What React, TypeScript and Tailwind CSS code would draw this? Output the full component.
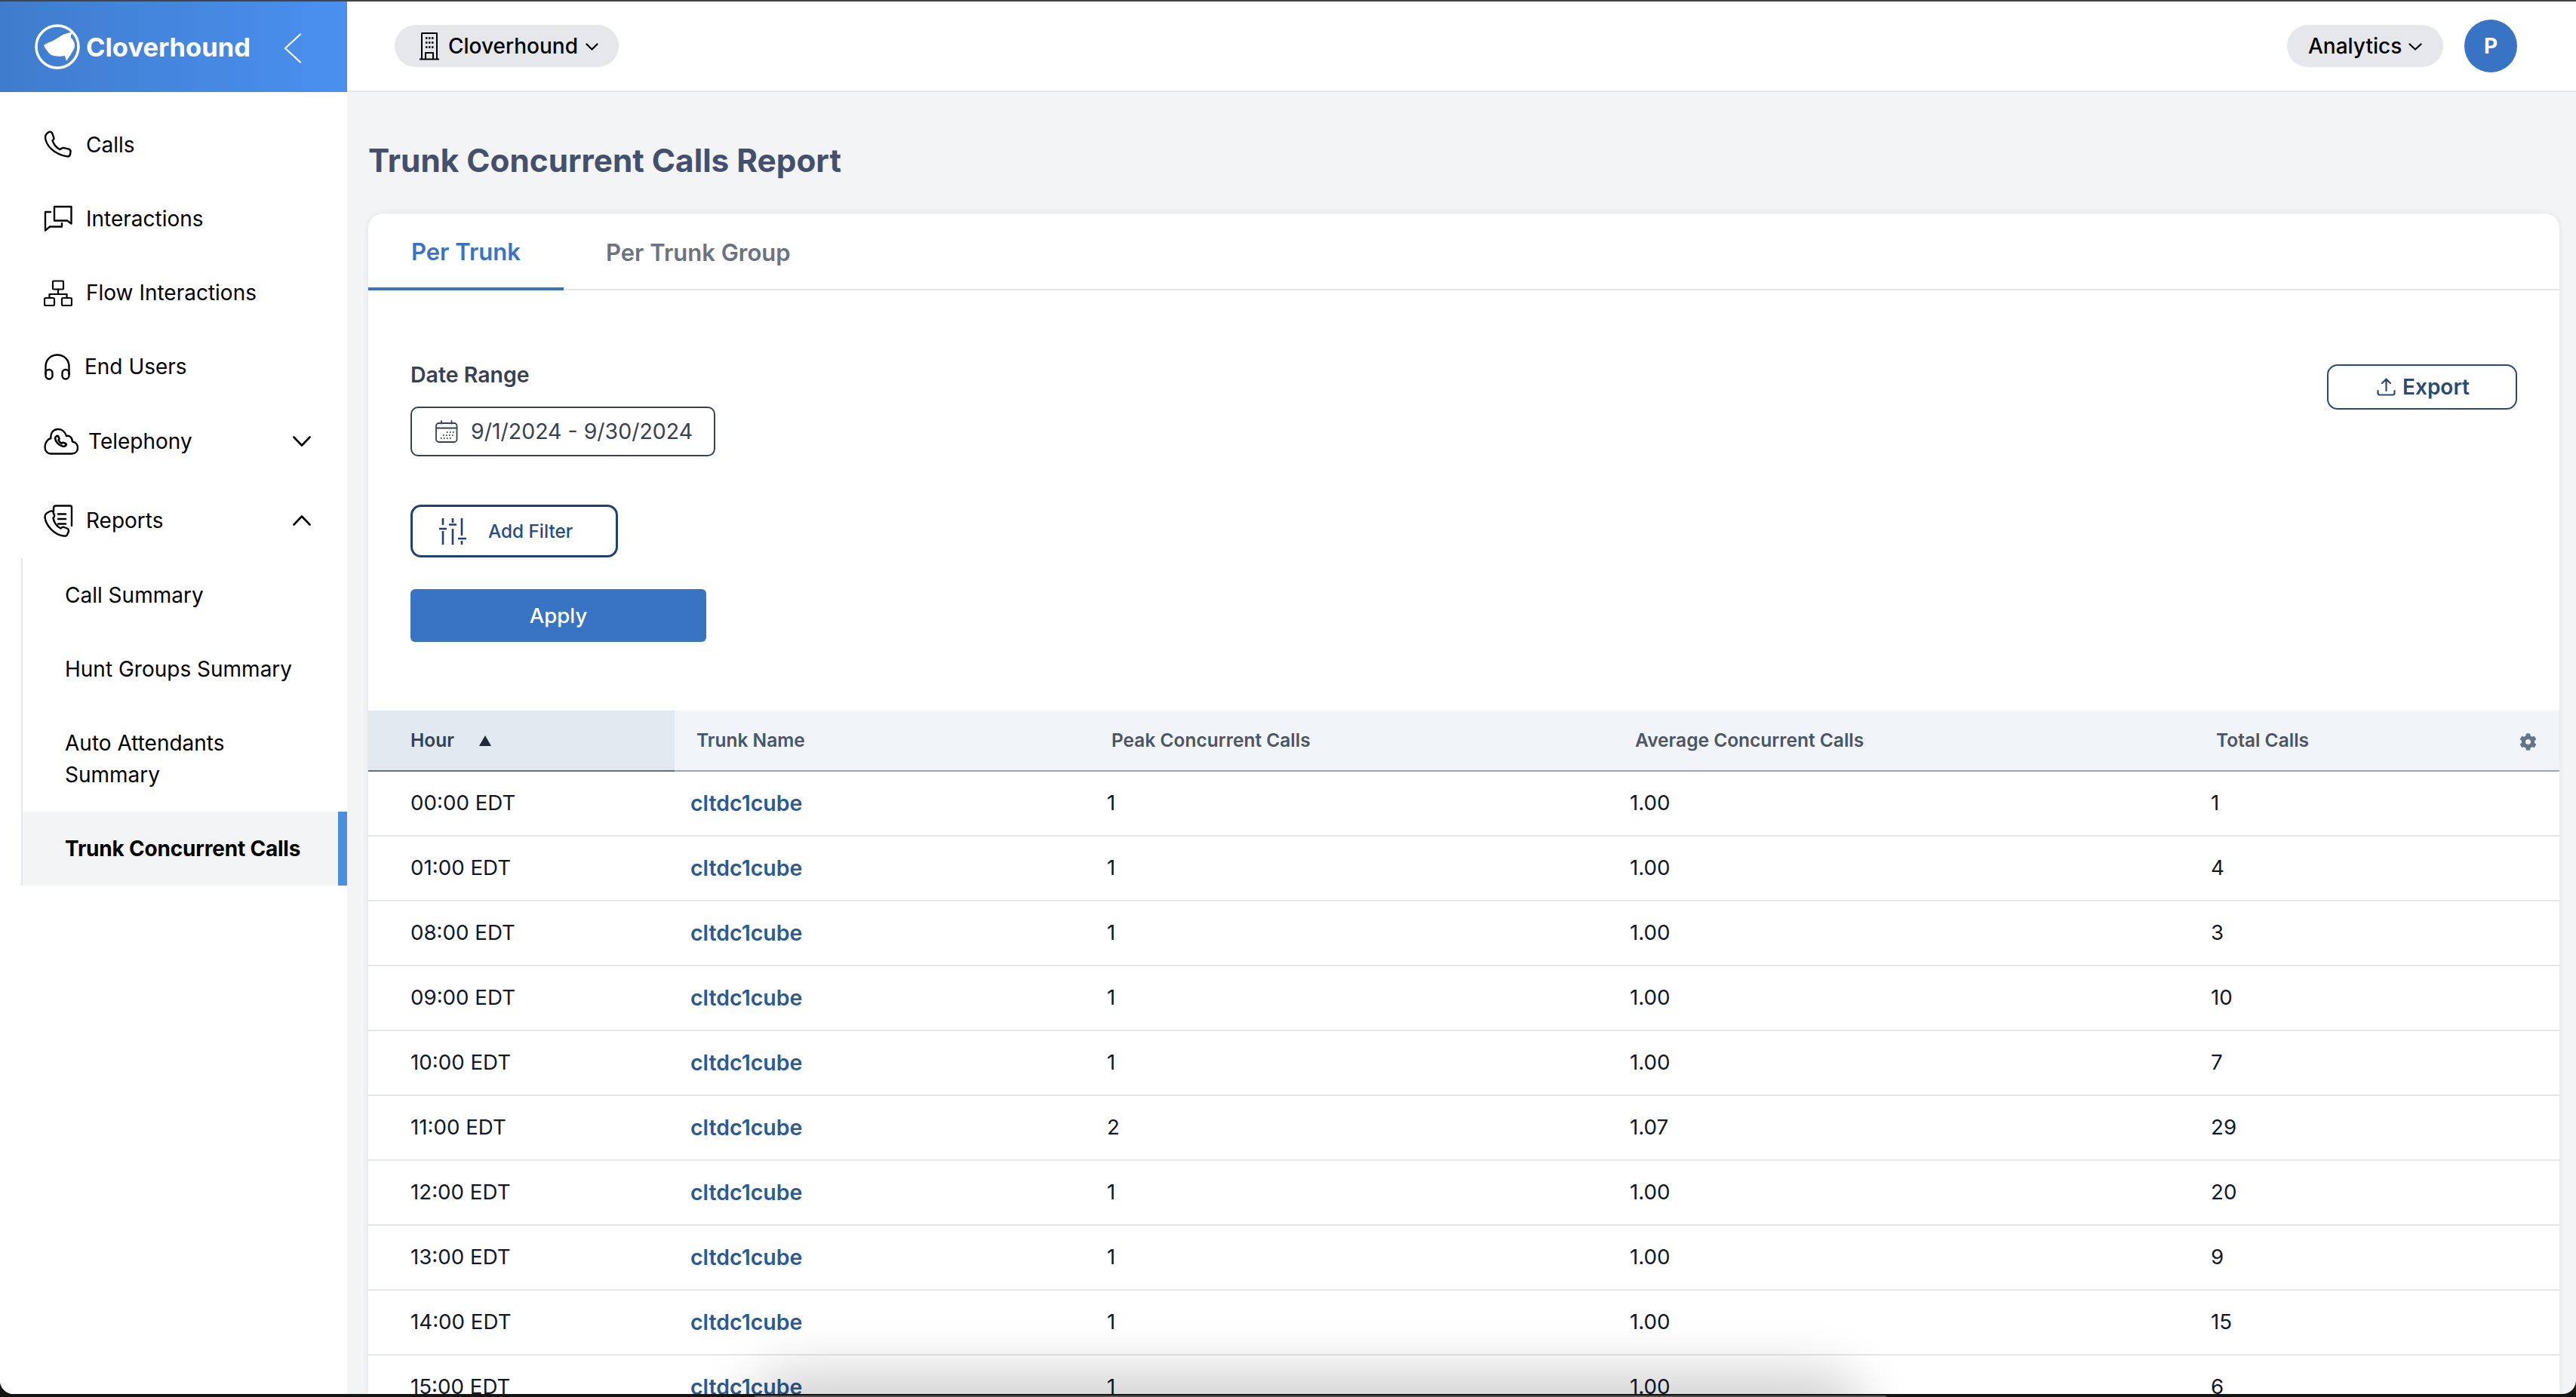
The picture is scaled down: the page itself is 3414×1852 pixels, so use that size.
import React from "react";
import { FaCog } from "react-icons/fa";

const Ico = ({ w, h, children, cls = "" }: { w: number; h: number; children: React.ReactNode; cls?: string }) => (
  <svg width={w} height={h} viewBox={`0 0 ${w} ${h}`} fill="none" stroke="currentColor" strokeLinecap="round" strokeLinejoin="round" className={`shrink-0 ${cls}`}>
    {children}
  </svg>
);

const Logo = () => (
  <svg width="60" height="60" viewBox="0 0 60 60" className="shrink-0">
    <circle cx="30" cy="30" r="28" fill="none" stroke="#fff" strokeWidth="3.500" />
    <path d="M12 28C18 24 26 22 34 16C38 13 45 11 51 11C47 15 47 17 50 20C53 24 54 28 52 33C49 39 45 44 42 49L40 42C34 43 28 43 22 41C18 38 14 33 12 28Z" fill="#fff" />
  </svg>
);

const PhoneI = () => (
  <Ico w={38} h={38} cls="text-black">
    <path strokeWidth="2.400" d="M6 2.500c2-1.500 4.500-.8 5.300 1.300l2 5.700c.5 1.500-.3 2.700-1.800 3.700c1.500 5 5 9.500 10 12c1.700-1.700 3.500-2.700 5.500-2.100l6 1.500c2 .6 3 2 2.500 4l-.5 3c-.5 2-2 3-4 2.800C14 32 3 20 2 9.500c-.2-3 1.500-5.300 4-7z" />
  </Ico>
);
const ChatI = () => (
  <Ico w={38} h={36} cls="text-black">
    <path strokeWidth="2.400" d="M14 2H36.500V24.500L31 20.500H14z" />
    <path strokeWidth="2.400" d="M9 9H2V33.500L8 28.500H24V24" />
  </Ico>
);
const FlowI = () => (
  <Ico w={38} h={35} cls="text-black">
    <rect x="12" y="1.500" width="14" height="11" rx="1" strokeWidth="2.200" />
    <path strokeWidth="2.200" d="M19 12.500V19M7.500 24V19H30.500V24" />
    <rect x="1" y="24" width="13" height="10" rx="1.500" strokeWidth="2.200" />
    <rect x="24" y="24" width="13" height="10" rx="1.500" strokeWidth="2.200" />
  </Ico>
);
const HeadI = () => (
  <Ico w={36} h={35} cls="text-black">
    <path strokeWidth="2.400" d="M2.500 27V17C2.500 8 9 1.500 18 1.500S33.500 8 33.500 17V27" />
    <rect x="2.500" y="21" width="9" height="12.500" rx="4.500" strokeWidth="2.400" />
    <rect x="24.500" y="21" width="9" height="12.500" rx="4.500" strokeWidth="2.400" />
  </Ico>
);
const CloudI = () => (
  <Ico w={46} h={36} cls="text-black">
    <path strokeWidth="2.400" d="M9 34.500H37C42 34.500 45 31 45 26.500C45 22 42 19 38 18.500C38 13 34 10 30 11C28 4.500 23 1.500 18 2C12 2.500 8.500 8 9.500 14C5 15 1.500 20 1.500 25.500C1.500 31 5 34.500 9 34.500Z" />
    <path strokeWidth="2.600" d="M16.500 11.500c1-1 2.500-.8 3 .5l1 2.300c.3.900-.3 1.500-1 2c.8 2 2.200 3.500 4.200 4.500c.7-.8 1.500-1.200 2.400-.9l2.500.9c1.200.5 1.500 1.800.7 2.700c-1 1-2.500 1.500-4 1.200C20 23.500 15.500 18.500 15 14c0-1 .6-1.800 1.500-2.500z" />
  </Ico>
);
const ReportI = () => (
  <Ico w={39} h={43} cls="text-black">
    <path strokeWidth="2.400" d="M13 9V5C13 3 14 1.500 16 1.500H35C36.500 1.500 37 2.500 37 4V28" />
    <path strokeWidth="2.600" d="M19 12.500H29M19 19H29M19 25.500H29" />
    <path strokeWidth="2.400" d="M7 9.500l2.500-1c1.500-.4 2.500.2 3 1.500l1.500 4c.5 1.500-.2 2.500-1.500 3.500c.8 6 4.500 11 10 14c1.500-1.500 3-2 4.500-1.500l4 1.500c1.800.8 2.500 3 1.500 5l-1 2.500c-.8 2-2.500 3-5 2.500C14 40 3 28 1.500 17c-.2-3.500 2-6 5.500-7.500z" />
  </Ico>
);

const Chevron = ({ up = false, w = 24, h = 14, sw = 2.600, cls = "" }: { up?: boolean; w?: number; h?: number; sw?: number; cls?: string }) => (
  <Ico w={w} h={h} cls={cls}>
    <path strokeWidth={sw} d={up ? `M1.500 ${h - 1.5}L${w / 2} 1.500L${w - 1.5} ${h - 1.5}` : `M1.500 1.500L${w / 2} ${h - 1.5}L${w - 1.5} 1.500`} />
  </Ico>
);

const Building = () => (
  <Ico w={26} h={38} cls="text-black">
    <path strokeWidth="2" d="M3 36V2H23V36M0.500 36.500H25.500" />
    <path strokeWidth="2" d="M8 36V28H18V36" />
    <path strokeWidth="2.500" strokeLinecap="butt" d="M8 8.500h2.500M12 8.500h2.500M16 8.500h2.500M8 14.500h2.500M12 14.500h2.500M16 14.500h2.500M8 20.500h2.500M12 20.500h2.500M16 20.500h2.500" />
  </Ico>
);

const Calendar = () => (
  <Ico w={30} h={30} cls="text-[#374151]">
    <rect x="1" y="4" width="27.500" height="25" rx="3.500" strokeWidth="1.800" />
    <path strokeWidth="1.800" d="M1 10.500H28.500M8 1V4.500M21.500 1V4.500" />
    <path strokeWidth="1.800" strokeLinecap="butt" d="M15 16h1.500M19 16h1.500M23 16h1.500M10 20h1.500M14 20h1.500M18 20h1.500M22 20h1.500M7 24h1.500M11 24h1.500M15 24h1.500M19 24h1.500" />
  </Ico>
);

const Sliders = () => (
  <Ico w={36} h={36} cls="text-[#1f3f7a]">
    <g strokeWidth="2.600" strokeLinecap="butt">
      <path d="M5 1V10M5 18V36M0 15H10" />
      <path d="M18 1V7M18 15V36M13 9.500H23" />
      <path d="M30 1V24M30 31V36M25 28H36" />
    </g>
  </Ico>
);

const Upload = () => (
  <Ico w={25} h={24} cls="text-[#2a4a73]">
    <path strokeWidth="2.200" d="M12.500 17V2M7 7L12.500 1.500L18 7" />
    <path strokeWidth="2.200" d="M1.500 17V20C1.500 21.500 2.500 22.500 4 22.500H21C22.500 22.500 23.500 21.500 23.500 20V17" />
  </Ico>
);

const NavItem = ({ icon, label, h = "h-[98px]", gap = "gap-[18px]", chevron, up }: { icon: React.ReactNode; label: string; h?: string; gap?: string; chevron?: boolean; up?: boolean }) => (
  <div className={`flex items-center pl-[58px] pr-[48px] ${h} text-[28px] text-black`}>
    <div className={`flex items-center ${gap} flex-1`}>
      {icon}
      <span>{label}</span>
    </div>
    {chevron && <Chevron up={up} />}
  </div>
);

const rows: [string, string, string, string][] = [
  ["00:00 EDT", "1", "1.00", "1"],
  ["01:00 EDT", "1", "1.00", "4"],
  ["08:00 EDT", "1", "1.00", "3"],
  ["09:00 EDT", "1", "1.00", "10"],
  ["10:00 EDT", "1", "1.00", "7"],
  ["11:00 EDT", "2", "1.07", "29"],
  ["12:00 EDT", "1", "1.00", "20"],
  ["13:00 EDT", "1", "1.00", "9"],
  ["14:00 EDT", "1", "1.00", "15"],
  ["15:00 EDT", "1", "1.00", "6"],
];

const gridCols = "grid grid-cols-[406px_552px_693px_770px_483px]";

export default function App() {
  return (
    <div className="relative w-[3414px] h-[1852px] overflow-hidden bg-[#141410] font-['Inter','Liberation_Sans',sans-serif]">
      <div className="relative flex h-[1848px] flex-col overflow-hidden rounded-b-[18px] border-t-2 border-[#444444] bg-[#f3f4f6]">
        <div className="flex flex-1 min-h-0">
          {/* Sidebar */}
          <aside className="flex w-[460px] shrink-0 flex-col bg-white">
            <div className="flex h-[120px] items-center bg-gradient-to-r from-[#3f7ccd] to-[#4a90f0] pl-[46px] text-white">
              <Logo />
              <span className="ml-[8px] pt-[2px] text-[34.500px] font-bold">Cloverhound</span>
              <Ico w={24} h={40} cls="ml-[44px] mt-[4px] text-white">
                <path strokeWidth="2.200" d="M22 1.500L2 20L22 38.500" />
              </Ico>
            </div>
            <nav className="flex flex-col pt-[21px]">
              <NavItem icon={<PhoneI />} label="Calls" />
              <NavItem icon={<ChatI />} label="Interactions" />
              <NavItem icon={<FlowI />} label="Flow Interactions" />
              <NavItem icon={<HeadI />} label="End Users" />
              <NavItem icon={<CloudI />} label="Telephony" h="h-[100px]" gap="gap-[13px]" chevron />
              <div className="h-[5px]" />
              <NavItem icon={<ReportI />} label="Reports" h="h-[100px]" gap="gap-[17px]" chevron up />
              <div className="ml-[28px] flex flex-col border-l-2 border-[#e5e7eb] text-[28px] text-black">
                <div className="flex h-[98px] items-center pl-[56px]">Call Summary</div>
                <div className="flex h-[98px] items-center pl-[56px]">Hunt Groups Summary</div>
                <div className="flex h-[140px] items-center pl-[56px] leading-[42px]">
                  <span>Auto Attendants<br />Summary</span>
                </div>
                <div className="flex h-[98px] items-center border-r-[12px] border-[#4a8ede] bg-[#f3f4f6] pl-[56px] font-bold tracking-[-0.2px]">Trunk Concurrent Calls</div>
              </div>
            </nav>
          </aside>

          {/* Main */}
          <main className="flex min-w-0 flex-1 flex-col">
            <header className="flex h-[120px] shrink-0 items-center justify-between border-b-2 border-[#e5e7eb] bg-white pl-[63px] pr-[78px]">
              <div className="flex h-[56px] w-[297px] items-center rounded-full bg-[#e5e7eb] pl-[33px] text-[28px] font-medium text-black">
                <Building />
                <span className="ml-[12px]">Cloverhound</span>
                <Chevron w={17} h={10} sw={2.200} cls="ml-[10px] mt-[2px]" />
              </div>
              <div className="flex items-center gap-[28px]">
                <div className="flex h-[56px] w-[207px] items-center rounded-full bg-[#e5e7eb] pl-[28px] text-[28px] font-medium text-black">
                  <span>Analytics</span>
                  <Chevron w={18} h={10} sw={2.200} cls="ml-[9px] mt-[2px]" />
                </div>
                <div className="flex h-[70px] w-[70px] items-center justify-center rounded-full bg-[#3873c4] text-[28px] font-bold text-white">P</div>
              </div>
            </header>

            <div className="flex h-[161px] shrink-0 items-center pl-[28px] pt-[21px]">
              <h1 className="text-[42.300px] font-bold text-[#434f6d]">Trunk Concurrent Calls Report</h1>
            </div>

            <section className="ml-[28px] mr-[22px] flex min-h-0 flex-1 flex-col overflow-hidden rounded-t-[20px] bg-white shadow-[0_0_8px_rgba(0,0,0,0.08)]">
              <div className="flex h-[102px] shrink-0 border-b-2 border-[#e5e7eb] text-[31px] font-semibold">
                <div className="-mb-[2px] flex w-[259px] items-center border-b-4 border-[#3873c4] pl-[57px] pt-[5px] text-[#3873c4]">Per Trunk</div>
                <div className="flex items-center pl-[56px] pt-[5px] text-[#6b7280]">Per Trunk Group</div>
              </div>

              <div className="flex shrink-0 items-start justify-between pl-[56px] pr-[56px] pt-[94px]">
                <div className="flex flex-col items-start">
                  <label className="text-[28.500px] font-semibold leading-[36px] text-[#374151]">Date Range</label>
                  <div className="mt-[24px] flex h-[66px] w-[404px] items-center rounded-[10px] border-2 border-[#374151] pl-[31px] text-[28.500px] text-[#374151]">
                    <Calendar />
                    <span className="ml-[17px] whitespace-nowrap pt-[1px]">9/1/2024 - 9/30/2024</span>
                  </div>
                  <div className="mt-[64px] flex h-[70px] w-[275px] items-center rounded-[14px] border-[3px] border-[#1e4270] pl-[35px] text-[24.300px] font-medium text-[#1f4e87]">
                    <Sliders />
                    <span className="ml-[29px]">Add Filter</span>
                  </div>
                  <div className="mt-[42px] flex h-[70px] w-[392px] items-center justify-center rounded-[6px] bg-[#3873c4] pt-[1px] text-[27.500px] font-medium text-white">Apply</div>
                </div>
                <div className="mt-[4px] flex h-[60px] w-[252px] items-center rounded-[14px] border-2 border-[#2a4a73] pl-[64px] text-[28px] font-semibold text-[#2a4a73]">
                  <Upload />
                  <span className="ml-[9px]">Export</span>
                </div>
              </div>

              <div className="mt-[91px] flex flex-col">
                <div className={`${gridCols} h-[81px] items-stretch bg-[#f1f5fa] text-[24.500px] font-semibold text-[#4b5563]`}>
                  <div className="flex items-center border-b-2 border-[#64708a] bg-[#e2e8f0] pl-[56px] text-[#334155]">
                    <span>Hour</span>
                    <svg width="16" height="14" viewBox="0 0 16 14" className="ml-[33px]"><path d="M8 0L16 14H0Z" fill="#1e293b" /></svg>
                  </div>
                  <div className="flex items-center border-b-2 border-[#9aa5b8] pl-[29px]">Trunk Name</div>
                  <div className="flex items-center border-b-2 border-[#9aa5b8] pl-[27px]">Peak Concurrent Calls</div>
                  <div className="flex items-center border-b-2 border-[#9aa5b8] pl-[28px]">Average Concurrent Calls</div>
                  <div className="relative flex items-center border-b-2 border-[#9aa5b8] pl-[28px]">
                    Total Calls
                    <FaCog className="absolute right-[30px] top-[30px] text-[23px] text-[#64748b]" />
                  </div>
                </div>
                {rows.map((r) => (
                  <div key={r[0]} className={`${gridCols} h-[86px] shrink-0 items-center border-b-2 border-[#e5e7eb] text-[27.700px] text-[#111827]`}>
                    <div className="pl-[56px]">{r[0]}</div>
                    <div className="pl-[21px] text-[28.500px] font-semibold text-[#2a5a94]">cltdc1cube</div>
                    <div className="pl-[21px]">{r[1]}</div>
                    <div className="pl-[21px]">{r[2]}</div>
                    <div className="pl-[21px]">{r[3]}</div>
                  </div>
                ))}
              </div>
            </section>
          </main>
        </div>
        {/* dock shadow overlay */}
        <div className="absolute bottom-[-70px] left-[1020px] h-[70px] w-[1420px] rounded-[30px] shadow-[0_0_70px_30px_rgba(0,0,0,0.18)]" />
      </div>
      <div className="absolute bottom-0 left-[1000px] h-[2px] w-[1500px] bg-[#555555]" />
    </div>
  );
}
